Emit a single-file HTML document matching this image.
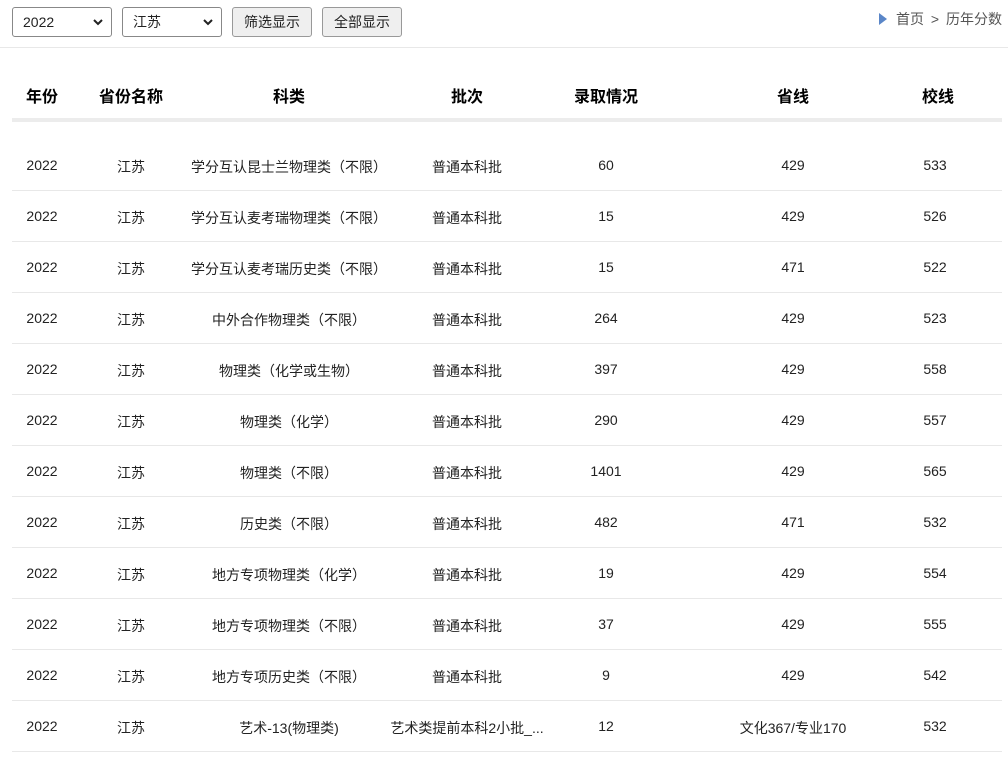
<!DOCTYPE html>
<html><head><meta charset="utf-8"><style>
*{margin:0;padding:0;box-sizing:border-box}
body{width:1008px;height:761px;overflow:hidden;background:#fff;font-family:"Liberation Sans","Noto Sans CJK SC",sans-serif;color:#222;font-size:14px;position:relative}
.sel{position:absolute;top:7px;height:30px;width:100px;border:1px solid #888;border-radius:3px;background:#fff;font-size:14px;line-height:28px;padding-left:10px}
.sel svg{position:absolute;right:8px;top:11px}
.btn{position:absolute;top:7px;height:30px;width:80px;border:1px solid #999;border-radius:3px;background:#efefef;font-size:14px;line-height:28px;text-align:center}
.hr{position:absolute;left:0;right:0;top:47px;height:1px;background:#e8e8e8}
.bc{position:absolute;top:9px;right:6px;color:#555;font-size:14px}
.c{position:absolute;text-align:center;white-space:nowrap;transform:translateX(-50%)}
.h{font-weight:bold;font-size:16px;color:#000;top:83px}
.bar{position:absolute;left:12px;width:990px;top:118px;height:4px;background:#ececec}
.row{position:absolute;left:12px;width:990px;height:51px;border-bottom:1px solid #e8e8e8}
.row .c{top:17px}
</style></head><body>
<div class="sel" style="left:12px">2022<svg width="10" height="7" viewBox="0 0 10 7"><path d="M1 1l4 4 4-4" stroke="#222" stroke-width="2" fill="none"/></svg></div>
<div class="sel" style="left:122px">江苏<svg width="10" height="7" viewBox="0 0 10 7"><path d="M1 1l4 4 4-4" stroke="#222" stroke-width="2" fill="none"/></svg></div>
<div class="btn" style="left:232px">筛选显示</div>
<div class="btn" style="left:322px">全部显示</div>
<div class="bc"><svg width="10" height="12" viewBox="0 0 10 12" style="vertical-align:-1px;margin-right:8px"><path d="M1 0l8 6-8 6z" fill="#5a86c8"/></svg>首页 <span style="margin:0 3px">&gt;</span> 历年分数</div>
<div class="hr"></div>
<div class="c h" style="left:42px">年份</div>
<div class="c h" style="left:131px">省份名称</div>
<div class="c h" style="left:289px">科类</div>
<div class="c h" style="left:467px">批次</div>
<div class="c h" style="left:606px">录取情况</div>
<div class="c h" style="left:793px">省线</div>
<div class="c h" style="left:938px">校线</div>
<div class="bar"></div>
<div id="rows"></div>
<div class="row" style="top:140px"><div class="c" style="left:30px">2022</div><div class="c" style="left:119px">江苏</div><div class="c" style="left:277px">学分互认昆士兰物理类（不限）</div><div class="c" style="left:455px">普通本科批</div><div class="c" style="left:594px">60</div><div class="c" style="left:781px">429</div><div class="c" style="left:923px">533</div></div>
<div class="row" style="top:191px"><div class="c" style="left:30px">2022</div><div class="c" style="left:119px">江苏</div><div class="c" style="left:277px">学分互认麦考瑞物理类（不限）</div><div class="c" style="left:455px">普通本科批</div><div class="c" style="left:594px">15</div><div class="c" style="left:781px">429</div><div class="c" style="left:923px">526</div></div>
<div class="row" style="top:242px"><div class="c" style="left:30px">2022</div><div class="c" style="left:119px">江苏</div><div class="c" style="left:277px">学分互认麦考瑞历史类（不限）</div><div class="c" style="left:455px">普通本科批</div><div class="c" style="left:594px">15</div><div class="c" style="left:781px">471</div><div class="c" style="left:923px">522</div></div>
<div class="row" style="top:293px"><div class="c" style="left:30px">2022</div><div class="c" style="left:119px">江苏</div><div class="c" style="left:277px">中外合作物理类（不限）</div><div class="c" style="left:455px">普通本科批</div><div class="c" style="left:594px">264</div><div class="c" style="left:781px">429</div><div class="c" style="left:923px">523</div></div>
<div class="row" style="top:344px"><div class="c" style="left:30px">2022</div><div class="c" style="left:119px">江苏</div><div class="c" style="left:277px">物理类（化学或生物）</div><div class="c" style="left:455px">普通本科批</div><div class="c" style="left:594px">397</div><div class="c" style="left:781px">429</div><div class="c" style="left:923px">558</div></div>
<div class="row" style="top:395px"><div class="c" style="left:30px">2022</div><div class="c" style="left:119px">江苏</div><div class="c" style="left:277px">物理类（化学）</div><div class="c" style="left:455px">普通本科批</div><div class="c" style="left:594px">290</div><div class="c" style="left:781px">429</div><div class="c" style="left:923px">557</div></div>
<div class="row" style="top:446px"><div class="c" style="left:30px">2022</div><div class="c" style="left:119px">江苏</div><div class="c" style="left:277px">物理类（不限）</div><div class="c" style="left:455px">普通本科批</div><div class="c" style="left:594px">1401</div><div class="c" style="left:781px">429</div><div class="c" style="left:923px">565</div></div>
<div class="row" style="top:497px"><div class="c" style="left:30px">2022</div><div class="c" style="left:119px">江苏</div><div class="c" style="left:277px">历史类（不限）</div><div class="c" style="left:455px">普通本科批</div><div class="c" style="left:594px">482</div><div class="c" style="left:781px">471</div><div class="c" style="left:923px">532</div></div>
<div class="row" style="top:548px"><div class="c" style="left:30px">2022</div><div class="c" style="left:119px">江苏</div><div class="c" style="left:277px">地方专项物理类（化学）</div><div class="c" style="left:455px">普通本科批</div><div class="c" style="left:594px">19</div><div class="c" style="left:781px">429</div><div class="c" style="left:923px">554</div></div>
<div class="row" style="top:599px"><div class="c" style="left:30px">2022</div><div class="c" style="left:119px">江苏</div><div class="c" style="left:277px">地方专项物理类（不限）</div><div class="c" style="left:455px">普通本科批</div><div class="c" style="left:594px">37</div><div class="c" style="left:781px">429</div><div class="c" style="left:923px">555</div></div>
<div class="row" style="top:650px"><div class="c" style="left:30px">2022</div><div class="c" style="left:119px">江苏</div><div class="c" style="left:277px">地方专项历史类（不限）</div><div class="c" style="left:455px">普通本科批</div><div class="c" style="left:594px">9</div><div class="c" style="left:781px">429</div><div class="c" style="left:923px">542</div></div>
<div class="row" style="top:701px"><div class="c" style="left:30px">2022</div><div class="c" style="left:119px">江苏</div><div class="c" style="left:277px">艺术-13(物理类)</div><div class="c" style="left:455px">艺术类提前本科2小批_...</div><div class="c" style="left:594px">12</div><div class="c" style="left:781px">文化367/专业170</div><div class="c" style="left:923px">532</div></div>
</body></html>
